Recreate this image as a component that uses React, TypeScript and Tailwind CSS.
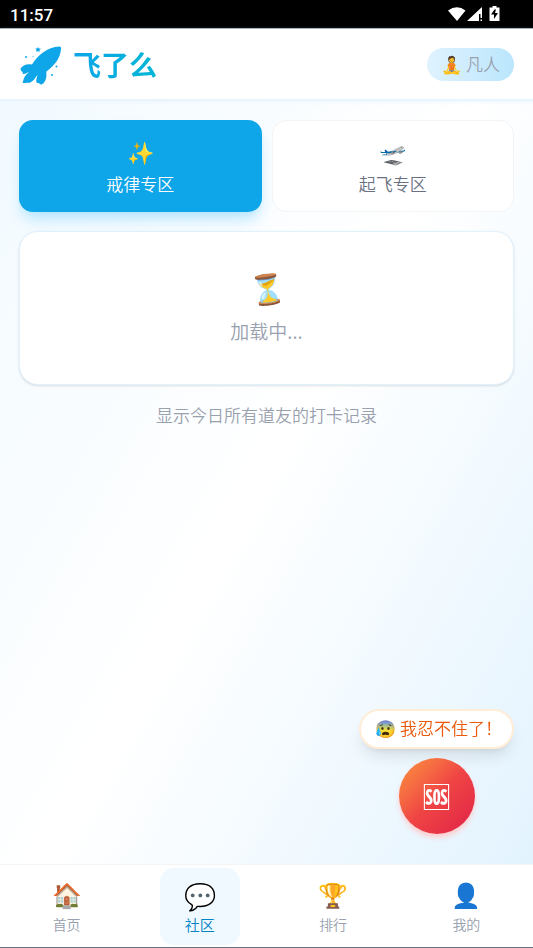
import { useState } from 'react'

const TILES = [
  { id: 'rules', icon: '✨', label: '戒律专区' },
  { id: 'takeoff', icon: '🛫', label: '起飞专区' },
]

const TABS = [
  { id: 'home', icon: '🏠', label: '首页' },
  { id: 'community', icon: '💬', label: '社区' },
  { id: 'rank', icon: '🏆', label: '排行' },
  { id: 'me', icon: '👤', label: '我的' },
]

function StatusBar() {
  return (
    <div className="flex h-[29px] items-center justify-between border-b border-gray-400 bg-black pr-8 pl-[10px] text-white">
      <span className="pt-[2px] font-[Roboto] text-[17px] leading-5 font-medium">11:57</span>
      <svg width="53" height="18" viewBox="0 0 53 18" fill="#fff" aria-hidden="true">
        <path d="M0 5.500Q9 -1 17.500 5.500L9 16Z" />
        <path d="M34 2v7h-3v7H19Z" />
        <path d="M32.500 7h1.500v6h-1.500zM32.500 14.500h1.500v1.500h-1.500z" />
        <path d="M44.500 1h4v1.500h3V16h-10V2.500h3z" />
        <path d="M46.500 4.500l-3.500 5h3v4.500l4-6h-3l1-3.500z" fill="#000" />
      </svg>
    </div>
  )
}

function Rocket() {
  return (
    <svg width="44" height="42" viewBox="-1 0 44 42" fill="#0ea5e9" aria-hidden="true">
      <path d="M39.500 3.500c1.200 0 1.700.8 1.500 2C40.500 15 35 22 26.500 28.500c-.5 2 .5 4-.5 7-.6 2.500-2 5-4.500 6-1.500.3-2-1.500-3.500-1.500-2 .2-2-2-1.500-4l1-4c-1.500 1.500-2.500 4-5 6-1.500 1.200-3 2.200-4.500 1.800-1.500-.5-3.500.7-5.500 0 1-2 .8-4 2.500-6.500 1-1.600 2.500-3 4-4.300-2 .7-3.500 2-5.500 2-1.300 0-1-1.200-.7-2C.500 28 1 27 .5 25.500 3 22 7 20.500 12 21.500 18 12 27 4 39.500 3.500Z" />
      <path d="M18 4l.9 1.400 1.900.2-1.300 1.300.3 1.900-1.800-.6-1.800.6.3-1.900-1.300-1.300 1.900-.2z" />
      <circle cx="6" cy="14" r="1" />
      <circle cx="13" cy="13.500" r=".5" />
      <circle cx="36.500" cy="23.500" r="1" />
      <circle cx="32" cy="32" r="1" />
    </svg>
  )
}

export default function App() {
  const [tile, setTile] = useState('rules')
  const [tab, setTab] = useState('community')

  return (
    <div className="flex min-h-screen flex-col bg-linear-to-br from-[#f0f9ff] via-white to-[#e0f2fe] font-['Noto_Sans_CJK_SC',sans-serif] font-[350]">
      <StatusBar />

      <header className="flex h-[72px] items-center justify-between border-b-2 border-[#e8f5fe] bg-white px-[19px] shadow-sm shadow-sky-50">
        <div className="flex items-center gap-[10px]">
          <Rocket />
          <h1 className="bg-linear-to-r from-[#0ea5e9] to-[#06b6d4] bg-clip-text text-[28px] leading-10 font-bold text-transparent">飞了么</h1>
        </div>
        <span className="flex h-[33px] items-center gap-1 rounded-full bg-linear-to-r from-[#e0f2fe] to-[#bae6fd] px-[14px] text-[17px] text-gray-400">
          <span>🧘</span>凡人
        </span>
      </header>

      <main className="flex-1 px-[19px] pt-[19px]">
        <div className="grid grid-cols-2 gap-[10px]">
          {TILES.map((t) => (
            <button
              key={t.id}
              onClick={() => setTile(t.id)}
              className={
                tile === t.id
                  ? 'flex h-[92px] flex-col items-center justify-center rounded-[14px] bg-[#0ea5e9] text-[17px] leading-6 text-white shadow-lg shadow-sky-200'
                  : 'flex h-[92px] flex-col items-center justify-center rounded-[14px] border border-gray-100 bg-white text-[17px] leading-6 text-gray-500'
              }
            >
              <span className="mb-[6px] text-[22px] leading-[30px]">{t.icon}</span>
              {t.label}
            </button>
          ))}
        </div>

        <section className="mt-[19px] flex h-[154px] flex-col items-center justify-center rounded-[19px] border border-[#e0f2fe] bg-white pb-1 text-gray-400 shadow-sm">
          <span className="-rotate-8 text-[29px] leading-10">⏳</span>
          <p className="mt-[10px] text-[19px] leading-7">加载中...</p>
        </section>

        <p className="mt-[18px] text-center text-[17px] leading-6 text-gray-400">显示今日所有道友的打卡记录</p>
      </main>

      <div className="fixed right-[19px] bottom-[114px] flex flex-col items-center gap-[9px]">
        <button className="flex h-10 items-center gap-1 rounded-full border-2 border-[#ffedd5] bg-white pr-[10px] pb-[2px] pl-[14px] text-[17px] text-[#ea580c] shadow-lg">
          <span>😰</span>我忍不住了！
        </button>
        <button className="flex size-19 items-center justify-center rounded-full bg-linear-to-br from-[#fb923c] via-[#ef4444] to-[#e11d48] text-[28px] font-bold text-white shadow-md shadow-red-200">
          🆘
        </button>
      </div>

      <nav className="sticky bottom-0 grid h-21 grid-cols-4 border-t border-b border-t-gray-100 border-b-gray-500 bg-white">
        {TABS.map((t) => (
          <button
            key={t.id}
            onClick={() => setTab(t.id)}
            className={
              tab === t.id
                ? 'mt-[3px] mb-[2px] flex w-20 flex-col items-center justify-center justify-self-center rounded-[14px] bg-[#f0f9ff] text-[15px] leading-5 text-[#0284c7]'
                : 'mt-[3px] mb-[2px] flex w-20 flex-col items-center justify-center justify-self-center rounded-[14px] pb-[2px] text-[14px] leading-5 text-gray-400'
            }
          >
            <span className={tab === t.id ? 'mb-1 text-[26px] leading-8' : 'mb-1 text-[24px] leading-8'}>{t.icon}</span>
            {t.label}
          </button>
        ))}
      </nav>
    </div>
  )
}
